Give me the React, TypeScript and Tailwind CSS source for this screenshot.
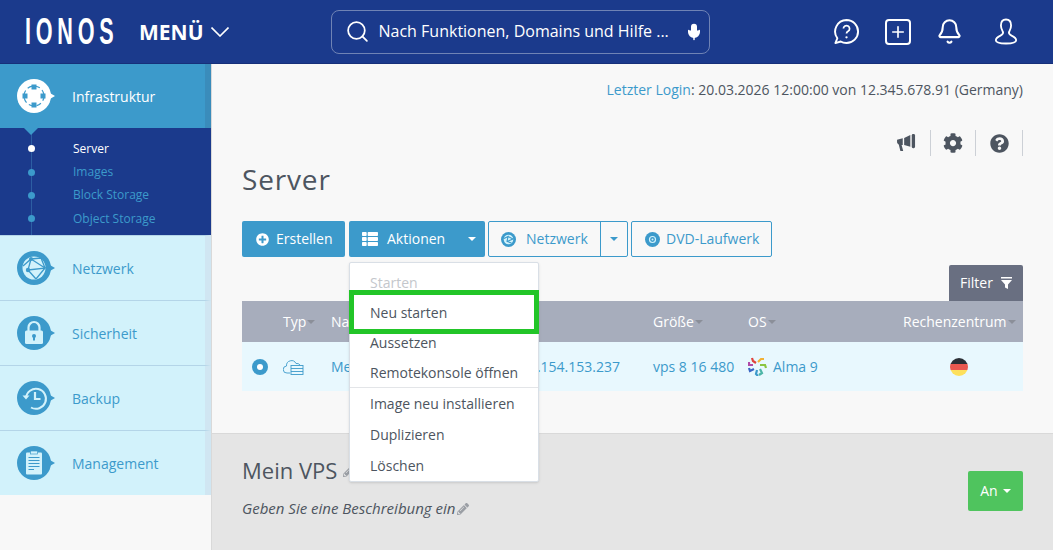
import { Search, Mic, Plus, Bell } from "lucide-react";
import { FaCog, FaPencilAlt, FaPlusCircle, FaQuestionCircle, FaThList } from "react-icons/fa";
import type { ReactNode } from "react";

// ---------------------------------------------------------------------------
// Icons
// ---------------------------------------------------------------------------

function Bubble({ children, active }: { children: ReactNode; active?: boolean }) {
  const fill = active ? "#ffffff" : "#3c9acb";
  return (
    <svg width="38" height="34" viewBox="0 0 38 34" className="shrink-0">
      <circle cx="17" cy="17" r="17" fill={fill} />
      <path d="M32 13.5 L38 17 L32 20.5 Z" fill={fill} />
      {children}
    </svg>
  );
}

function InfraGlyph() {
  return (
    <g fill="#3c9acb">
      <circle cx="17" cy="17" r="10" fill="none" stroke="#3c9acb" strokeWidth="1.2" strokeDasharray="5 3" />
      <rect x="14.5" y="5.5" width="5" height="5" />
      <rect x="14.5" y="23.5" width="5" height="5" />
      <rect x="5.5" y="14.5" width="5" height="5" />
      <rect x="23.5" y="14.5" width="5" height="5" />
    </g>
  );
}

function GlobeGlyph() {
  return (
    <g>
      <circle cx="17" cy="17" r="11.5" fill="#d2f2fb" />
      <path d="M6 15 L14 8 L24 7 M14 8 L11 19 L19 28 M11 19 L28 17 L19 28 M24 7 L28 17 M14 8 L28 17" fill="none" stroke="#3c9acb" strokeWidth="1.300" />
      <circle cx="11" cy="19" r="2.200" fill="#3c9acb" />
      <circle cx="14" cy="8" r="2" fill="#3c9acb" />
    </g>
  );
}

function LockGlyph() {
  return (
    <g>
      <path d="M11.5 15 V11.5 a5.5 5.5 0 0 1 11 0 V15" fill="none" stroke="#d2f2fb" strokeWidth="2.2" />
      <rect x="8" y="14.5" width="18" height="13.5" rx="1.5" fill="#d2f2fb" />
      <circle cx="17" cy="20" r="2" fill="#3c9acb" />
      <rect x="16" y="20" width="2" height="4.5" fill="#3c9acb" />
    </g>
  );
}

function HistoryGlyph() {
  return (
    <g fill="none" stroke="#d2f2fb" strokeWidth="2">
      <path d="M9 17 a10 10 0 1 1 5 9.5" />
      <path d="M5.5 14.5 L9 18.5 L12.5 14.5" fill="#d2f2fb" stroke="none" />
      <path d="M18 11 V18 H23.5" strokeWidth="2.2" />
    </g>
  );
}

function ClipboardGlyph() {
  return (
    <g>
      <rect x="9" y="6.5" width="16" height="22" rx="1" fill="#d2f2fb" />
      <rect x="13.5" y="5" width="7" height="3" fill="#d2f2fb" stroke="#3c9acb" strokeWidth="0.7" />
      <path d="M11.5 11.5 H22.5 M11.5 14.5 H22.5 M11.5 17.5 H22.5 M11.5 20.5 H22.5 M11.5 23.5 H17" stroke="#3c9acb" strokeWidth="1.1" />
    </g>
  );
}

function HelpBubbleIcon() {
  return (
    <svg width="27" height="27" viewBox="0 0 28 28" fill="none" stroke="white" strokeWidth="2">
      <path d="M14 2 a12 12 0 0 1 0 24 c-2.5 0 -4.500 -.6 -6 -1.600 L2.500 26 l2 -5 A12 12 0 0 1 14 2 Z" strokeLinejoin="round" />
      <path d="M10.800 11 a3.200 3.200 0 1 1 4.800 2.800 c-1 .6 -1.600 1.200 -1.600 2.400" strokeWidth="1.800" />
      <circle cx="14" cy="20" r="1.200" fill="white" stroke="none" />
    </svg>
  );
}

function UserIcon() {
  return (
    <svg width="24" height="29" viewBox="0 0 26 30" fill="none" stroke="white" strokeWidth="2">
      <path d="M13 2 c-3.600 0 -5.500 2.800 -5.500 6.500 c0 3.500 1.500 5.500 2.200 7 c.6 1.500 -.4 2.800 -2.700 4 c-3 1.400 -5 3 -5 5 c0 2.500 3 3.500 11 3.500 s11 -1 11 -3.500 c0 -2 -2 -3.600 -5 -5 c-2.300 -1.200 -3.300 -2.500 -2.700 -4 c.7 -1.500 2.200 -3.500 2.200 -7 C18.500 4.800 16.600 2 13 2 Z" strokeLinejoin="round" />
    </svg>
  );
}

function Megaphone() {
  return (
    <svg width="20" height="18" viewBox="0 0 21 19" fill="#4d5560">
      <path d="M0 6 L6 4.500 V11.500 L4.800 11.500 L6.500 18 H3.500 L1.800 11 C.6 10.500 0 9.500 0 8.500 Z" />
      <path d="M7.500 4.200 L14 1 V13.500 L7.500 11.500 Z" />
      <rect x="15.500" y="0" width="3.500" height="15" rx="1.500" />
    </svg>
  );
}

function SmallGlobe() {
  return (
    <svg width="15" height="15" viewBox="0 0 15 15">
      <circle cx="7.500" cy="7.500" r="7.500" fill="#3c9acb" />
      <circle cx="7.500" cy="7.500" r="4.800" fill="#d2f2fb" />
      <path d="M3 6.500 L7 4.500 L6 9.500 L10.500 11 M7 4.500 L12 7 L6 9.500" fill="none" stroke="#3c9acb" strokeWidth="1.100" />
    </svg>
  );
}

function DiscIcon() {
  return (
    <svg width="15" height="15" viewBox="0 0 15 15">
      <circle cx="7.500" cy="7.500" r="7.500" fill="#3c9acb" />
      <circle cx="7.500" cy="7.500" r="3" fill="none" stroke="#d2f2fb" strokeWidth="1.200" />
      <circle cx="7.500" cy="7.500" r="1" fill="#d2f2fb" />
    </svg>
  );
}

function Caret({ className }: { className: string }) {
  return <span className={`inline-block h-0 w-0 border-x-[4px] border-t-[4px] border-x-transparent ${className}`} />;
}

function CloudServer() {
  return (
    <svg width="21" height="16" viewBox="0 0 21 16" fill="none" stroke="#3c9acb" strokeWidth="0.900">
      <path d="M7 14 H4 a3.500 3.500 0 0 1 -.5 -7 a5 5 0 0 1 9.500 -2.500 a4 4 0 0 1 4 1.500" />
      <rect x="8" y="6.500" width="12" height="9" fill="#e8f8fe" />
      <path d="M8 9.500 H20 M8 12.500 H20" />
    </svg>
  );
}

function AlmaIcon() {
  return (
    <svg width="19" height="19" viewBox="0 0 19 19" fill="none" strokeWidth="2.200">
      <path d="M4 1 L5 4 L8 6" stroke="#e0433c" />
      <path d="M10 5 L13 2 L16 2" stroke="#f2b134" />
      <path d="M12 8 L17 8 L18 11" stroke="#8bc540" />
      <path d="M12 12 L14 16 L11 18" stroke="#4db6a8" />
      <path d="M9 13 L8 17 L10 19" stroke="#3c9acb" />
      <path d="M6 12 L2 14 L1 11" stroke="#3a66c4" />
      <path d="M5 8 L1 8 L1 5" stroke="#b04aa8" />
    </svg>
  );
}

function FlagDe() {
  return (
    <span className="flex h-[18px] w-[18px] flex-col overflow-hidden rounded-full">
      <span className="flex-1 bg-[#2b2f36]" />
      <span className="flex-1 bg-[#ea5850]" />
      <span className="flex-1 bg-[#fde05c]" />
    </span>
  );
}

// ---------------------------------------------------------------------------
// Sidebar
// ---------------------------------------------------------------------------

const NAV_ITEMS = [
  { label: "Netzwerk", glyph: <GlobeGlyph /> },
  { label: "Sicherheit", glyph: <LockGlyph /> },
  { label: "Backup", glyph: <HistoryGlyph /> },
  { label: "Management", glyph: <ClipboardGlyph /> },
];

const SUB_ITEMS = ["Server", "Images", "Block Storage", "Object Storage"];

function Sidebar() {
  return (
    <aside className="w-[212px] shrink-0 border-r border-[#d9d9d9] bg-[#f8f8f8]">
      <div className="relative flex h-[64px] items-center border-r-[6px] border-[#3a8cbb] bg-[#3c9acb] pl-[17px]">
        <Bubble active>
          <InfraGlyph />
        </Bubble>
        <span className="ml-[17px] pt-[2px] text-sm text-white">Infrastruktur</span>
        <span className="absolute left-[24px] top-[64px] z-10 h-0 w-0 border-x-[7px] border-t-[7px] border-x-transparent border-t-[#3c9acb]" />
      </div>
      <ul className="relative flex h-[107px] flex-col bg-[#1b3a8c] pt-[9px]">
        <span className="absolute bottom-0 left-[31px] top-0 w-px bg-[#2d5ea3]" />
        {SUB_ITEMS.map((item, i) => (
          <li key={item} className="relative flex h-[23.4px] items-center pl-[73px] text-xs">
            <span
              className={`absolute left-[28px] h-[7px] w-[7px] rounded-full ${i === 0 ? "bg-white" : "bg-[#3c9acb]"}`}
            />
            <span className={i === 0 ? "text-white" : "text-[#3c9acb]"}>{item}</span>
          </li>
        ))}
      </ul>
      {NAV_ITEMS.map((item) => (
        <div
          key={item.label}
          className="flex h-[65px] items-center border-r-[6px] border-t border-[#d0e6f2] border-t-[#b4d5e8] bg-[#d2f2fb] pl-[17px]"
        >
          <Bubble>{item.glyph}</Bubble>
          <span className="ml-[17px] pt-[2px] text-sm text-[#3c9acb]">{item.label}</span>
        </div>
      ))}
    </aside>
  );
}

// ---------------------------------------------------------------------------
// Page
// ---------------------------------------------------------------------------

export default function App() {
  return (
    <div className="flex h-[550px] w-[1053px] flex-col overflow-hidden bg-[#f8f8f8] font-['Open_Sans',sans-serif] text-sm text-[#4d5560]">
      {/* Header */}
      <header className="flex h-[64px] shrink-0 items-center border-b border-[#16307a] bg-[#1b3a8c] text-white">
        <div className="ml-[25px] w-[88px] origin-left scale-x-[0.6] whitespace-nowrap font-['Liberation_Sans',sans-serif] text-[36px] font-bold leading-none tracking-[0.22em]">
          IONOS
        </div>
        <div className="ml-[26px] flex items-center gap-[7px]">
          <span className="text-[21px] font-bold">MENÜ</span>
          <svg width="18" height="10" viewBox="0 0 18 10" fill="none" stroke="white" strokeWidth="1.600">
            <path d="M.5 .5 L9 9 L17.500 .5" />
          </svg>
        </div>
        <div className="ml-[102px] flex h-[44px] w-[379px] items-center rounded-lg border border-[#6f83b5] pl-[13px] pr-[6px]">
          <Search size={25} strokeWidth={1.7} className="shrink-0" />
          <span className="ml-[9px] flex-1 whitespace-nowrap text-[16px]">Nach Funktionen, Domains und Hilfe ...</span>
          <Mic size={18} fill="white" className="shrink-0" />
        </div>
        <div className="ml-[123px] flex items-center">
          <HelpBubbleIcon />
          <span className="ml-[25px] flex h-[26px] w-[26px] items-center justify-center rounded-[4px] border-2 border-white">
            <Plus size={18} strokeWidth={2.2} />
          </span>
          <Bell size={27} strokeWidth={1.8} className="ml-[25px]" />
          <span className="ml-[31px]">
            <UserIcon />
          </span>
        </div>
      </header>

      <div className="flex min-h-0 flex-1">
        <Sidebar />

        <main className="relative flex min-w-0 flex-1 flex-col">
          <div className="flex h-[369px] shrink-0 flex-col px-[30px] pt-[16px]">
            <p className="h-[19px] text-right leading-[19px]">
              <span className="text-[#3c9acb]">Letzter Login</span>: 20.03.2026 12:00:00 von 12.345.678.91 (Germany)
            </p>
            <div className="mt-[31px] flex justify-end">
              <span className="flex h-[26px] w-[47px] items-center justify-center border-r border-[#ccd0d6]">
                <Megaphone />
              </span>
              <span className="flex h-[26px] w-[45px] items-center justify-center border-r border-[#ccd0d6]">
                <FaCog size={20} color="#4d5560" />
              </span>
              <span className="flex h-[26px] w-[47px] items-center justify-center border-r border-[#ccd0d6]">
                <FaQuestionCircle size={19} color="#4d5560" />
              </span>
            </div>
            <h1 className="mt-[4px] text-[28px] leading-[38px] tracking-[0.03em]">Server</h1>

            {/* Toolbar */}
            <div className="mt-[23px] flex h-[36px] items-stretch">
              <button className="flex w-[103px] items-center rounded-[2px] bg-[#3c9acb] pl-[14px] text-white">
                <FaPlusCircle size={13} />
                <span className="ml-[7px]">Erstellen</span>
              </button>
              <button className="ml-[4px] flex w-[136px] items-center rounded-[2px] bg-[#3c9acb] pl-[13px] text-white">
                <FaThList size={16} />
                <span className="ml-[9px]">Aktionen</span>
                <Caret className="ml-[23px] border-t-white" />
              </button>
              <div className="ml-[3px] flex w-[140px] rounded-[2px] border border-[#3c9acb] text-[#3c9acb]">
                <span className="flex flex-1 items-center border-r border-[#3c9acb] pl-[12px]">
                  <SmallGlobe />
                  <span className="ml-[10px]">Netzwerk</span>
                </span>
                <span className="flex w-[26px] items-center justify-center">
                  <Caret className="border-t-[#3c9acb]" />
                </span>
              </div>
              <div className="ml-[3px] flex w-[141px] items-center rounded-[2px] border border-[#3c9acb] pl-[13px] text-[#3c9acb]">
                <DiscIcon />
                <span className="ml-[6px]">DVD-Laufwerk</span>
              </div>
            </div>

            {/* Filter */}
            <div className="mt-[8px] flex justify-end">
              <div className="flex h-[36px] w-[74px] items-center justify-center gap-[8px] rounded-t-[2px] bg-[#696f81] text-white">
                Filter
                <svg width="11" height="12" viewBox="0 0 11 12" fill="white">
                  <rect x="0" y="0" width="11" height="1.500" />
                  <path d="M0 3 H11 L7 7.500 V12 L4 10.500 V7.500 Z" />
                </svg>
              </div>
            </div>

            {/* Table */}
            <div className="flex h-[41px] items-center bg-[#a7adbc] text-white">
              <span className="ml-[41px] flex w-[48px] items-center gap-[1px]">
                Typ <Caret className="border-t-[#8b8f99]" />
              </span>
              <span className="w-[322px]">Name</span>
              <span className="flex w-[95px] items-center gap-[1px]">
                Größe <Caret className="border-t-[#8b8f99]" />
              </span>
              <span className="flex w-[155px] items-center gap-[1px]">
                OS <Caret className="border-t-[#8b8f99]" />
              </span>
              <span className="flex items-center gap-[1px]">
                Rechenzentrum <Caret className="border-t-[#8b8f99]" />
              </span>
            </div>
            <div className="flex h-[49px] items-center bg-[#e8f8fe] text-[#3c9acb]">
              <span className="ml-[10px] flex h-[16px] w-[16px] items-center justify-center rounded-full bg-[#3c9acb]">
                <span className="h-[6px] w-[6px] rounded-full bg-white" />
              </span>
              <span className="ml-[15px] w-[48px]">
                <CloudServer />
              </span>
              <span className="w-[18px] overflow-hidden whitespace-nowrap">Mein VPS</span>
              <span className="ml-[190px] flex w-[81px] justify-end overflow-hidden whitespace-nowrap">85.154.153.237</span>
              <span className="ml-[33px] w-[95px] whitespace-nowrap">vps 8 16 480</span>
              <span className="flex w-[202px] items-center gap-[6px]">
                <AlmaIcon />
                Alma 9
              </span>
              <FlagDe />
            </div>
          </div>

          {/* Detail panel */}
          <section className="flex flex-1 border-t border-[#d9d9d9] bg-[#e5e5e5] px-[30px] pt-[22px]">
            <div className="flex-1">
              <h2 className="flex h-[29px] items-center text-[22px]">
                Mein VPS
                <FaPencilAlt size={12} color="#9b9fa5" className="ml-[6px]" />
              </h2>
              <p className="mt-[13px] flex items-center text-[15px] italic">
                Geben Sie eine Beschreibung ein
                <FaPencilAlt size={12} color="#9b9fa5" className="ml-[2px]" />
              </p>
            </div>
            <div className="mt-[15px]">
              <button className="flex h-[40px] w-[55px] items-center justify-center gap-[5px] rounded-[2px] bg-[#4fc45e] text-white">
                An <Caret className="border-t-white" />
              </button>
            </div>
          </section>

          {/* Aktionen menu */}
          <div className="absolute left-[137px] top-[198px] flex h-[220px] w-[190px] flex-col rounded-[2px] border border-[#d9dfe6] bg-white text-[#4d5560] shadow-sm">
            <div className="flex h-[27px] items-center pl-[20px] pt-[13px] text-[#c4c7cc]">Starten</div>
            <div className="relative z-10 -mx-px flex h-[44px] shrink-0 items-center border-[5px] border-[#22c528] bg-white pl-[16px] pt-[1px]">
              Neu starten
            </div>
            <div className="flex h-[23px] items-center pb-[5px] pl-[20px]">Aussetzen</div>
            <div className="flex h-[31px] items-center border-b border-[#e3e5e8] pl-[20px] pt-[2px]">Remotekonsole öffnen</div>
            <div className="flex h-[30px] items-center pl-[20px] pt-[2px]">Image neu installieren</div>
            <div className="flex h-[31px] items-center pl-[20px] pt-[2px]">Duplizieren</div>
            <div className="flex h-[31px] items-center pl-[20px] pt-[2px]">Löschen</div>
          </div>
        </main>
      </div>
    </div>
  );
}
